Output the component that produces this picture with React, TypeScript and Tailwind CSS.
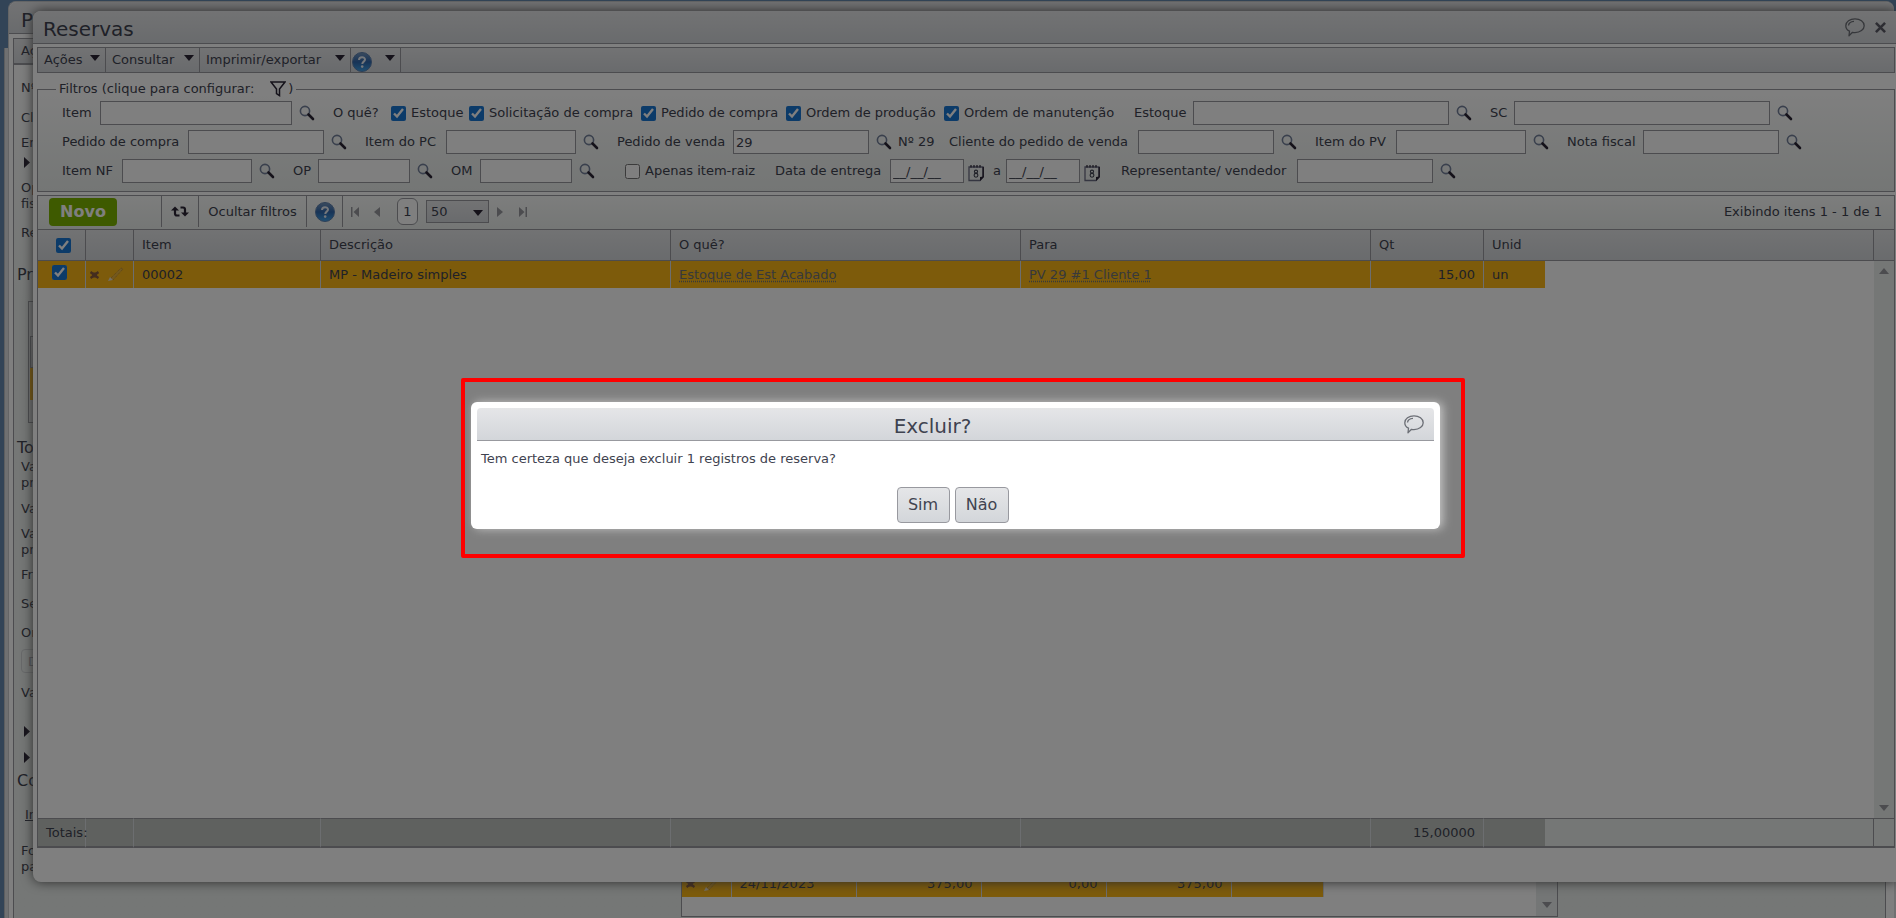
import type { ReactNode } from "react";

const bar = "bg-gradient-to-b from-[#e5e6e8] to-[#d3d6da]";

function Lupa() {
  return (
    <button type="button" aria-label="Pesquisar" className="ml-[7px] mr-[18px] shrink-0">
      <svg width="16" height="16" viewBox="0 0 16 16" fill="none">
        <circle cx="6" cy="6" r="4.6" stroke="#74819b" strokeWidth="1.6" />
        <path d="M9.5 9.5 14 14" stroke="#2b2535" strokeWidth="2.6" strokeLinecap="round" />
      </svg>
    </button>
  );
}

function Calendario() {
  return (
    <button type="button" aria-label="Calendário" className="ml-1 shrink-0 pt-1">
      <svg width="17" height="18" viewBox="0 0 17 18" fill="none">
        <path d="M1 3h14v10l-3 3.500H1z" stroke="#6b6c82" strokeWidth="1.3" />
        <path d="M15.200 3v10" stroke="#2b2535" strokeWidth="1.4" />
        <path d="M15.500 12.500v1l-3.500 3.500v-4z" fill="#2b2535" />
        <path d="M3 1v2.500M6 1v2.500M9 1v2.500M12 1v2.500" stroke="#2b2535" strokeWidth="1.2" />
        <ellipse cx="8" cy="7.600" rx="1.600" ry="1.500" stroke="#3f4350" strokeWidth="1.1" />
        <ellipse cx="8" cy="11.300" rx="1.900" ry="1.900" stroke="#3f4350" strokeWidth="1.1" />
      </svg>
    </button>
  );
}

function Balao() {
  return (
    <svg width="20" height="19" viewBox="0 0 20 19" fill="none" stroke="#6c6f76" strokeWidth="1.3" strokeLinejoin="round">
      <path d="M4.500 13.200C2 12 .8 10 .8 7.700.8 3.900 4.900.8 10 .8s9.200 3.100 9.200 6.900-4.100 6.900-9.200 6.900c-.9 0-1.700-.1-2.500-.3L4 17.800z" />
      <path d="M3.500 7.500C3.700 5.400 6 3.500 9 3.300" />
    </svg>
  );
}

function Ajuda() {
  return (
    <svg width="20" height="20" viewBox="0 0 20 20">
      <defs>
        <linearGradient id="ajuda" x1="0" y1="0" x2="0" y2="1">
          <stop offset="0" stopColor="#7596bd" />
          <stop offset="0.5" stopColor="#2f67ad" />
          <stop offset="1" stopColor="#3fa0e8" />
        </linearGradient>
      </defs>
      <circle cx="10" cy="10" r="9.500" fill="url(#ajuda)" stroke="#5c7fae" />
      <path d="M7 8c0-3.800 6-3.600 6-.4 0 2.100-2.700 2-2.700 4.400" fill="none" stroke="#e8eef6" strokeWidth="2" />
      <circle cx="10.200" cy="14.600" r="1.300" fill="#e8eef6" />
    </svg>
  );
}

function Seta({ className = "" }: { className?: string }) {
  return (
    <svg width="10" height="6" viewBox="0 0 10 6" className={className} fill="currentColor">
      <path d="M0 0h10L5 6z" />
    </svg>
  );
}

function Acoes() {
  return (
    <span className="flex items-center gap-2">
      <svg width="9" height="8" viewBox="0 0 9 8">
        <path d="M.5 1l8 6M8.500 1l-8 6" stroke="#8a5a3c" strokeWidth="2.400" />
        <path d="M2 1.500h5v5H2z" fill="#8a5a3c" />
      </svg>
      <svg width="17" height="15" viewBox="0 0 17 15">
        <path d="M4 11 14 1l2 1L6 13z" fill="#e8b23c" stroke="#b98a34" strokeDasharray="1 1" />
        <path d="M1 14l2-4 3 3z" fill="#e6dcc8" />
      </svg>
    </span>
  );
}

interface CampoProps {
  id: string;
  label: string;
  labelWidth: string;
  width: string;
  value?: string;
  children?: ReactNode;
}

function Campo({ id, label, labelWidth, width, value, children }: CampoProps) {
  return (
    <div className="flex items-center">
      <label htmlFor={id} className={`shrink-0 whitespace-nowrap ${labelWidth}`}>{label}</label>
      <input id={id} defaultValue={value} className={`h-6 border border-[#98999f] bg-white pl-0.5 ${width}`} />
      {children ?? <Lupa />}
    </div>
  );
}

function Check({ id, label, width, checked = true }: { id: string; label: string; width: string; checked?: boolean }) {
  return (
    <span className={`flex shrink-0 items-center gap-[5px] ${width}`}>
      <input id={id} type="checkbox" defaultChecked={checked} className="size-[15px] accent-[#1976d2]" />
      <label htmlFor={id} className="whitespace-nowrap">{label}</label>
    </span>
  );
}

function MenuItem({ children, className = "" }: { children: ReactNode; className?: string }) {
  return (
    <button type="button" className={`flex h-full items-center justify-between border-r border-[#98999f] pr-[5px] ${className}`}>
      {children}
      <Seta className="mb-1 text-[#2b2535]" />
    </button>
  );
}

const detalhes = [
  { text: "Nº", box: "h-[30px]" },
  { text: "Cl", box: "h-[25px]" },
  { text: "En", box: "h-5" },
  { text: "▸", box: "h-[23px]" },
  { text: "Op", box: "h-4" },
  { text: "fis", box: "h-[29px]" },
  { text: "Re", box: "h-[42px]" },
  { text: "Pr", box: "h-[34px] text-base -ml-1" },
];

const totais = [
  { text: "To", box: "h-[19px] text-base -ml-1" },
  { text: "Va", box: "h-4" },
  { text: "pr", box: "h-[26px]" },
  { text: "Va", box: "h-[25px]" },
  { text: "Va", box: "h-4" },
  { text: "pr", box: "h-[25px]" },
  { text: "Fr", box: "h-[29px]" },
  { text: "Se", box: "h-[29px]" },
  { text: "Or", box: "h-6" },
];

const condicoes = [
  { text: "Va", box: "h-[39px]" },
  { text: "▸", box: "h-6" },
  { text: "▸", box: "h-[21px]" },
  { text: "Co", box: "h-[34px] text-base -ml-1" },
  { text: "In", box: "h-[36px] underline pl-1" },
  { text: "Fo", box: "h-4" },
  { text: "pa", box: "h-4" },
];

function Linha({ text, box }: { text: string; box: string }) {
  return (
    <div className={`leading-4 ${box}`}>
      {text === "▸" ? (
        <svg width="6" height="11" viewBox="0 0 6 11" className="ml-[3px] mt-0.5" fill="#2b2535">
          <path d="M0 0l6 5.500L0 11z" />
        </svg>
      ) : (
        text
      )}
    </div>
  );
}

// Janela do pedido, atrás da janela de reservas
function JanelaPedido() {
  return (
    <div className="absolute bottom-0 left-2 right-[2px] top-px flex flex-col rounded-t-lg border-l border-t border-[#c8cacd] bg-white">
      <div className={`h-8 shrink-0 rounded-t-lg border-b border-[#98999f] pl-3 text-xl leading-9 ${bar}`}>P</div>
      <div className="ml-1 mr-2 mt-1 flex flex-1 flex-col border-x border-t border-[#98999f] bg-gradient-to-b from-white to-[#eaeeec] to-30%">
        <div className={`h-[26px] shrink-0 border-b-2 border-[#98999f] pl-[7px] leading-6 ${bar}`}>Aç</div>
        <div className="flex flex-1 justify-between">
          <div className="w-8 shrink-0 pl-[7px] pt-[15px]">
            {detalhes.map((d, i) => <Linha key={i} {...d} />)}
            <div className="mb-[17px] ml-[7px] h-[122px] border border-[#98999f] bg-[#e5e8e9] pl-px pt-[34px]">
              <div className={`h-8 border-y border-l border-[#98999f] ${bar}`} />
              <div className="h-8 bg-[#fab616]" />
            </div>
            {totais.map((d, i) => <Linha key={i} {...d} />)}
            <div className="mb-3 h-6 rounded-sm border border-[#cfd2d4] pl-1.5 pt-0.5 leading-5 text-[#a5a6ae]">D</div>
            {condicoes.map((d, i) => <Linha key={i} {...d} />)}
          </div>
          <div className="mb-px mr-[327px] flex w-[877px] items-end self-end border border-[#98999f] bg-white">
            <table className="mb-[19px] table-fixed border-collapse self-end">
              <tbody>
                <tr className="h-[26px] bg-[#fab616] text-right [&>td]:border-r [&>td]:border-[#d9dce0] [&>td]:pr-2">
                  <td className="w-[49px] pl-1"><Acoes /></td>
                  <td className="w-[125px] pl-2 text-left">24/11/2023</td>
                  <td className="w-[125px]">375,00</td>
                  <td className="w-[125px]">0,00</td>
                  <td className="w-[125px]">375,00</td>
                  <td className="w-[92px]" />
                </tr>
              </tbody>
            </table>
            <div className="ml-auto flex w-[21px] justify-center self-stretch bg-[#e8ecec]">
              <Seta className="mb-2 self-end text-[#98999f]" />
            </div>
          </div>
        </div>
      </div>
    </div>
  );
}

function Filtros() {
  return (
    <fieldset className="ml-1 mr-px mt-[5px] h-[114px] shrink-0 border border-[#98999f] bg-gradient-to-b from-white to-[#e9edeb]">
      <legend className="ml-[18px] flex h-[22px] items-center px-[3px]">
        Filtros (clique para configurar:
        <svg width="16" height="16" viewBox="0 0 16 16" className="ml-4 mr-0.5" fill="none" stroke="#2b2535" strokeWidth="1.5">
          <path d="M1 1h14L9.500 8v6.500l-3-2V8z" />
        </svg>
        )
      </legend>
      <div className="flex flex-col gap-[5px] pl-6 pt-px">
        <div className="flex h-6 items-center">
          <Campo id="item" label="Item" labelWidth="w-[38px]" width="w-48" />
          <span className="w-[58px] shrink-0">O quê?</span>
          <Check id="estoque" label="Estoque" width="w-[78px]" />
          <Check id="solicitacao" label="Solicitação de compra" width="w-[172px]" />
          <Check id="pedido" label="Pedido de compra" width="w-[145px]" />
          <Check id="producao" label="Ordem de produção" width="w-[158px]" />
          <Check id="manutencao" label="Ordem de manutenção" width="w-[190px]" />
          <Campo id="filtro-estoque" label="Estoque" labelWidth="w-[59px]" width="w-64" />
          <Campo id="sc" label="SC" labelWidth="w-6" width="w-64" />
        </div>
        <div className="flex h-6 items-center">
          <Campo id="pc" label="Pedido de compra" labelWidth="w-[126px]" width="w-[136px]" />
          <Campo id="item-pc" label="Item do PC" labelWidth="w-[81px]" width="w-[130px]" />
          <Campo id="pv" label="Pedido de venda" labelWidth="w-[116px]" width="w-[136px]" value="29" />
          <span className="-ml-3 w-[51px] shrink-0 whitespace-nowrap">Nº 29</span>
          <Campo id="cliente" label="Cliente do pedido de venda" labelWidth="w-[189px]" width="w-[136px]" />
          <Campo id="item-pv" label="Item do PV" labelWidth="w-[81px]" width="w-[130px]" />
          <Campo id="nf" label="Nota fiscal" labelWidth="w-[76px]" width="w-[136px]" />
        </div>
        <div className="flex h-6 items-center">
          <Campo id="item-nf" label="Item NF" labelWidth="w-[60px]" width="w-[130px]" />
          <Campo id="op" label="OP" labelWidth="w-[25px]" width="w-[92px]" />
          <Campo id="om" label="OM" labelWidth="w-[29px]" width="w-[92px]" />
          <span className="ml-3 flex"><Check id="raiz" label="Apenas item-raiz" width="w-[150px]" checked={false} /></span>
          <Campo id="de" label="Data de entrega" labelWidth="w-[115px]" width="w-[74px]" value="__/__/__"><Calendario /></Campo>
          <span className="w-2" />
          <Campo id="ate" label="a" labelWidth="w-[13px]" width="w-[74px]" value="__/__/__"><Calendario /></Campo>
          <span className="w-5" />
          <Campo id="vendedor" label="Representante/ vendedor" labelWidth="w-[176px]" width="w-[136px]" />
        </div>
      </div>
    </fieldset>
  );
}

function Paginacao() {
  return (
    <div className="flex h-[33px] shrink-0 items-stretch bg-gradient-to-b from-[#fafbfa] to-[#eaeeec] pb-[2px]">
      <div className="flex w-[124px] items-center border-r border-[#98999f] pl-[11px]">
        <button type="button" className="h-7 w-[68px] rounded-sm bg-[#7cb400] text-base font-bold text-white">Novo</button>
      </div>
      <button type="button" aria-label="Atualizar" className="flex w-[37px] items-center justify-center border-r border-[#98999f]">
        <svg width="18" height="13" viewBox="0 0 18 13" fill="none" stroke="#2b2535" strokeWidth="2.200">
          <path d="M8.500 10.500H6c-1.300 0-2-.8-2-2V5" />
          <path d="M9.500 2.500H12c1.300 0 2 .8 2 2V8" />
          <path d="M0 5.500 4 1.500l4 4zM10 7.500l4 4 4-4z" fill="#2b2535" stroke="none" />
        </svg>
      </button>
      <button type="button" className="w-[108px] whitespace-nowrap border-r border-[#98999f]">Ocultar filtros</button>
      <button type="button" aria-label="Ajuda" className="flex w-9 items-center justify-center border-r border-[#98999f]"><Ajuda /></button>
      <div className="flex items-center pl-2 text-[#98999f]">
        <svg width="8" height="10" viewBox="0 0 8 10" fill="currentColor"><path d="M0 0h1.500v10H0zM8 0v10L2.500 5z" /></svg>
        <svg width="6" height="10" viewBox="0 0 6 10" className="ml-[15px]" fill="currentColor"><path d="M6 0v10L0 5z" /></svg>
        <span className="ml-[17px] flex h-[27px] w-[21px] items-center justify-center rounded-md border border-[#98999f] bg-white text-[#3f4350]">1</span>
        <span className="relative ml-2 flex text-[#3f4350]">
          <select aria-label="Itens por página" className={`h-[23px] w-[63px] appearance-none border border-[#98999f] pl-1 ${bar}`}>
            <option>50</option>
          </select>
          <Seta className="pointer-events-none absolute right-1.5 top-2.5 text-[#2b2535]" />
        </span>
        <svg width="6" height="10" viewBox="0 0 6 10" className="ml-2" fill="currentColor"><path d="M0 0v10l6-5z" /></svg>
        <svg width="8" height="10" viewBox="0 0 8 10" className="ml-4" fill="currentColor"><path d="M0 0v10l5.500-5zM6.500 0H8v10H6.500z" /></svg>
      </div>
      <span className="ml-auto self-center pr-3">Exibindo itens 1 - 1 de 1</span>
    </div>
  );
}

function Grade() {
  return (
    <div className="min-h-0 flex-1">
      <table className="h-full w-full table-fixed border-separate border-spacing-0 text-left [&_td]:py-0 [&_td]:pl-2 [&_th]:pl-2 [&_th]:font-normal">
        <colgroup>
          <col className="w-12" />
          <col className="w-12" />
          <col className="w-[187px]" />
          <col className="w-[350px]" />
          <col className="w-[350px]" />
          <col className="w-[350px]" />
          <col className="w-[113px]" />
          <col className="w-[61px]" />
          <col />
          <col className="w-5" />
        </colgroup>
        <thead>
          <tr className={`h-8 ${bar} [&>th]:border-y [&>th]:border-r [&>th]:border-[#98999f] [&>th:last-child]:border-r-0`}>
            <th><input type="checkbox" aria-label="Selecionar todos" defaultChecked className="ml-2.5 block size-[15px] accent-[#1976d2]" /></th>
            <th />
            <th>Item</th>
            <th>Descrição</th>
            <th>O quê?</th>
            <th>Para</th>
            <th>Qt</th>
            <th colSpan={2}>Unid</th>
            <th />
          </tr>
        </thead>
        <tbody>
          <tr className="h-[27px] [&>td]:bg-[#fab616] [&>td:nth-child(-n+7)]:border-r [&>td]:border-[#d9dce0]">
            <td><input type="checkbox" aria-label="Selecionar 00002" defaultChecked className="mb-1 ml-1.5 block size-[15px] accent-[#1976d2]" /></td>
            <td className="pl-1!"><Acoes /></td>
            <td>00002</td>
            <td>MP - Madeiro simples</td>
            <td><a href="#estoque" className="text-[#6f7278] underline decoration-dotted underline-offset-2">Estoque de Est Acabado</a></td>
            <td><a href="#pv" className="text-[#6f7278] underline decoration-dotted underline-offset-2">PV 29 #1 Cliente 1</a></td>
            <td className="pr-2 text-right">15,00</td>
            <td>un</td>
            <td className="bg-white!" />
            <td rowSpan={2} className="bg-[#eaeeed]! p-0!">
              <div className="flex h-full flex-col items-center justify-between py-[7px] text-[#98999f]">
                <Seta className="rotate-180" />
                <Seta />
              </div>
            </td>
          </tr>
          <tr className="h-full"><td colSpan={9} /></tr>
        </tbody>
        <tfoot>
          <tr className="h-[30px] [&>td]:border-b-2 [&>td]:border-t [&>td]:border-y-[#98999f] [&>td]:border-r-[#d9dce0] [&>td]:bg-[#bec2bf] [&>td:nth-child(-n+7)]:border-r">
            <td className="whitespace-nowrap"><span>Totais:</span></td>
            <td />
            <td />
            <td />
            <td />
            <td />
            <td className="pr-2 text-right">15,00000</td>
            <td />
            <td className="border-r border-r-[#98999f]! bg-[#ebefed]!" />
            <td className="bg-[#ebefed]!" />
          </tr>
        </tfoot>
      </table>
    </div>
  );
}

function JanelaReservas() {
  return (
    <div className="absolute bottom-9 left-[33px] right-0 top-[11px] flex flex-col rounded-lg rounded-r-none bg-white shadow-[0_0_12px_#555]">
      <div className={`flex h-[33px] shrink-0 items-center rounded-tl-lg border-b border-[#98999f] pl-2.5 pr-2.5 ${bar}`}>
        <h1 className="pt-1 text-xl">Reservas</h1>
        <button type="button" aria-label="Comentários" className="ml-auto"><Balao /></button>
        <button type="button" aria-label="Fechar" className="ml-2.5">
          <svg width="11" height="11" viewBox="0 0 12 12" stroke="#5b5b66" strokeWidth="2.800"><path d="M1 1l10 10M11 1 1 11" /></svg>
        </button>
      </div>
      <div className={`ml-1 mr-px mt-[3px] flex h-[26px] shrink-0 border border-[#98999f] ${bar}`}>
        <MenuItem className="w-[68px] pl-1.5">Ações</MenuItem>
        <MenuItem className="w-[94px] pl-1.5">Consultar</MenuItem>
        <MenuItem className="w-[151px] pl-1.5">Imprimir/exportar</MenuItem>
        <MenuItem className="w-[50px] pl-px"><span className="pt-1"><Ajuda /></span></MenuItem>
      </div>
      <Filtros />
      <div className="mb-[34px] ml-1 mr-px mt-[3px] flex min-h-0 flex-1 flex-col border-x border-t border-[#98999f]">
        <Paginacao />
        <Grade />
      </div>
    </div>
  );
}

function Confirmacao() {
  return (
    <div className="absolute inset-0 flex items-center justify-center bg-black/50 pl-[30px] pt-[18px]">
      <div className="w-full max-w-[1004px] rounded-xs border-4 border-[#ff0000] pb-[25px] pl-1.5 pr-[21px] pt-5">
        <div role="dialog" aria-labelledby="confirmar" className="rounded-md bg-white p-1.5 shadow-[3px_0_10px_#c4c4c4]">
          <div className={`flex h-[33px] items-center rounded-t-sm border-b border-[#98999f] pr-2.5 ${bar}`}>
            <h2 id="confirmar" className="flex-1 pr-4 pt-1 text-center text-xl">Excluir?</h2>
            <button type="button" aria-label="Comentários"><Balao /></button>
          </div>
          <p className="pl-1 pt-2 leading-5">Tem certeza que deseja excluir 1 registros de reserva?</p>
          <div className="flex justify-center gap-[5px] pr-1.5 pt-[18px] text-base">
            <button type="button" className={`h-9 w-[53px] rounded-sm border border-[#98999f] ${bar}`}>Sim</button>
            <button type="button" className={`h-9 w-[54px] rounded-sm border border-[#98999f] ${bar}`}>Não</button>
          </div>
        </div>
      </div>
    </div>
  );
}

export default function App() {
  return (
    <div className="relative h-screen min-h-[640px] overflow-hidden bg-[#6488ae] font-['DejaVu_Sans',sans-serif] text-[13px] text-[#3f4350]">
      <div className="absolute bottom-0 left-1 right-0 top-12 border-l border-[#b9bcc0] bg-[#dfe1e3]" />
      <JanelaPedido />
      <JanelaReservas />
      <Confirmacao />
    </div>
  );
}
